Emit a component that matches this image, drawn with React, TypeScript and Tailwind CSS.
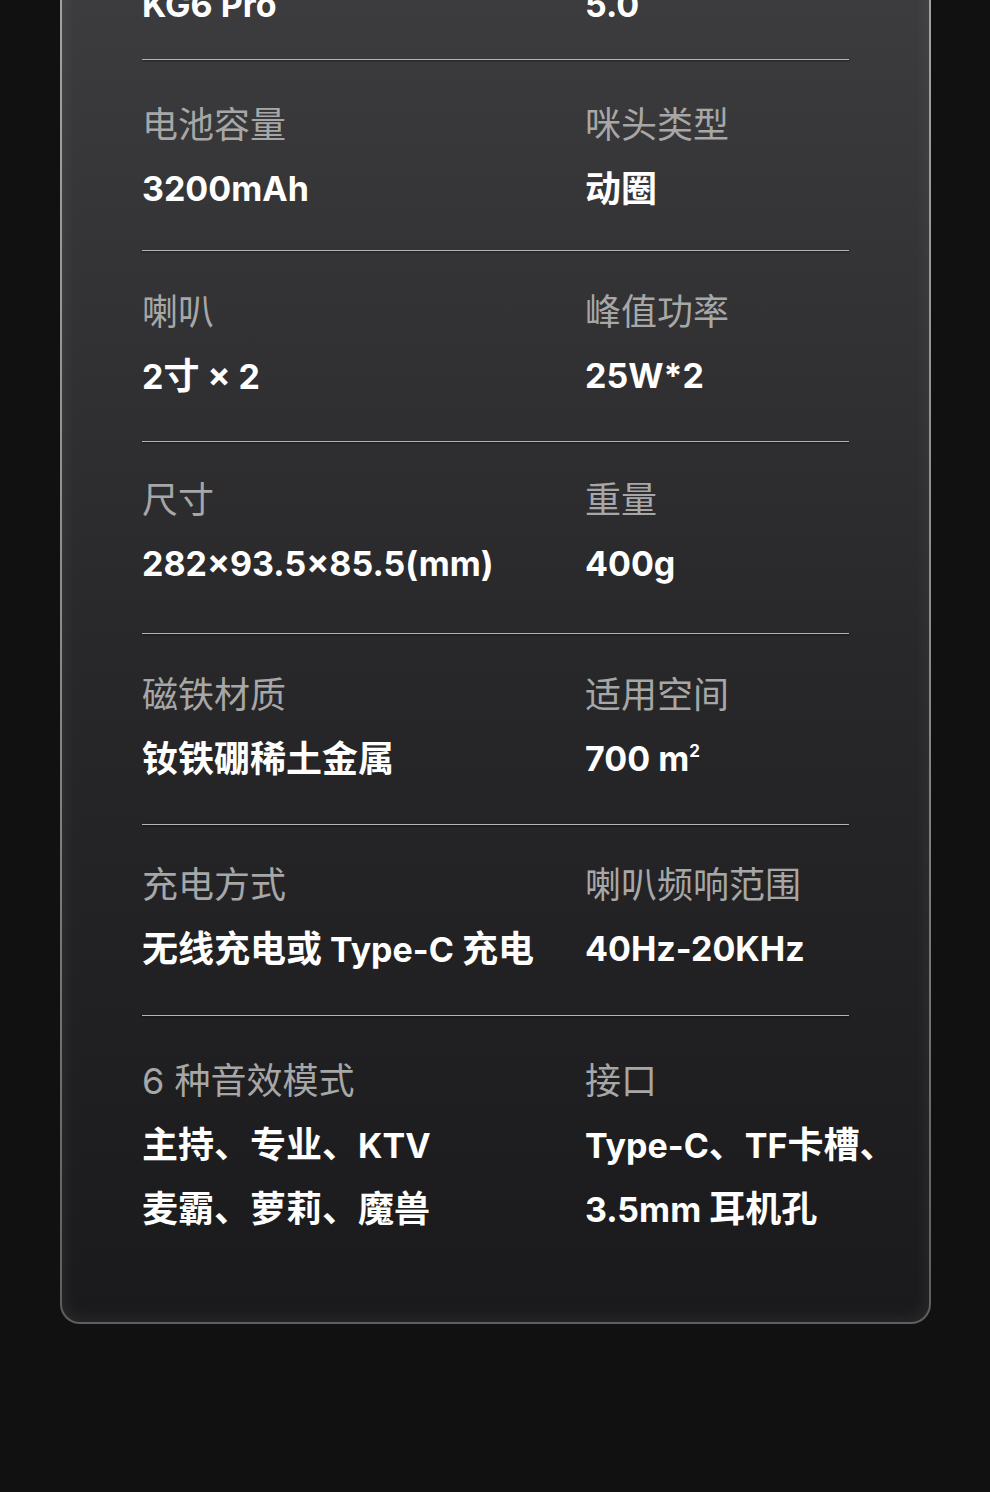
import React from 'react';

const specs = [
  { pad: 'pt-[43px] pb-[22px]', l: ['型号', 'KG6 Pro'], r: ['蓝牙版本', '5.0'] },
  { pad: 'pt-[45px] pb-[29px]', l: ['电池容量', '3200mAh'], r: ['咪头类型', '动圈'] },
  { pad: 'pt-[41px] pb-[33px]', l: ['喇叭', '2寸 × 2'], r: ['峰值功率', '25W*2'] },
  { pad: 'pt-[38px] pb-[37px]', l: ['尺寸', '282×93.5×85.5(mm)'], r: ['重量', '400g'] },
  { pad: 'pt-[41px] pb-[33px]', l: ['磁铁材质', '钕铁硼稀土金属'], r: ['适用空间', 'AREA'] },
  { pad: 'pt-[40px] pb-[34px]', l: ['充电方式', '无线充电或 Type-C 充电'], r: ['喇叭频响范围', '40Hz-20KHz'] },
  {
    pad: 'pt-[45px] pb-[33px]',
    l: ['6 种音效模式', '主持、专业、KTV\n麦霸、萝莉、魔兽'],
    r: ['接口', 'Type-C、TF卡槽、\n3.5mm 耳机孔'],
  },
];

// CJK glyphs sit a touch larger than the latin ones in the design
function Mixed({ line }: { line: string }) {
  const parts = line.split(/([\u3000-\u303f\u4e00-\u9fff\uff00-\uffef]+)/);
  return (
    <>
      {parts.map((p, i) =>
        /[\u3000-\u303f\u4e00-\u9fff\uff00-\uffef]/.test(p) ? (
          <span key={i} className="text-[36px]">{p}</span>
        ) : (
          <span key={i}>{p}</span>
        )
      )}
    </>
  );
}

function Value({ text }: { text: string }) {
  if (text === 'AREA') {
    return (
      <div className="h-[64px]">
        700 m<sup className="text-[17px] -top-[14px] relative align-baseline">2</sup>
      </div>
    );
  }
  return (
    <>
      {text.split('\n').map((line, i) => (
        <div key={i} className="h-[64px]">
          <Mixed line={line} />
        </div>
      ))}
    </>
  );
}

function Cell({ label, value }: { label: string; value: string }) {
  return (
    <div className="flex flex-col">
      <div className="text-[36px] leading-[40px] h-[40px] text-[#a7a7a7] whitespace-nowrap">{label}</div>
      <div className="mt-[12px] text-[34px] leading-[64px] font-bold text-white whitespace-nowrap">
        <Value text={value} />
      </div>
    </div>
  );
}

export default function App() {
  return (
    <div
      className="w-[990px] h-[1492px] overflow-hidden bg-[#111111]"
      style={{ fontFamily: 'Inter, "Noto Sans CJK SC", sans-serif' }}
    >
      <div className="ml-[60px] -mt-[171px] w-[871px] rounded-[20px] p-[2px] bg-[linear-gradient(to_bottom,#a8a8a8,#8a8a8a_55%,#5e5e5e)]">
        <div className="rounded-[18px] pt-[47px] pb-[48px] pl-[80px] bg-[linear-gradient(to_bottom,#414143_0%,#38383a_20%,#28282a_55%,#1a1a1c_100%)] shadow-[inset_0_0_18px_rgba(255,255,255,0.09)]">
          {specs.map((row, i) => (
            <div key={i} className="w-[707px]">
              <div className={`grid grid-cols-[443px_1fr] ${row.pad}`}>
                <Cell label={row.l[0]} value={row.l[1]} />
                <Cell label={row.r[0]} value={row.r[1]} />
              </div>
              {i < specs.length - 1 && (
                <div className="h-px bg-[#b4b4b4] shadow-[0_1px_2px_rgba(0,0,0,0.6)]" />
              )}
            </div>
          ))}
        </div>
      </div>
    </div>
  );
}
